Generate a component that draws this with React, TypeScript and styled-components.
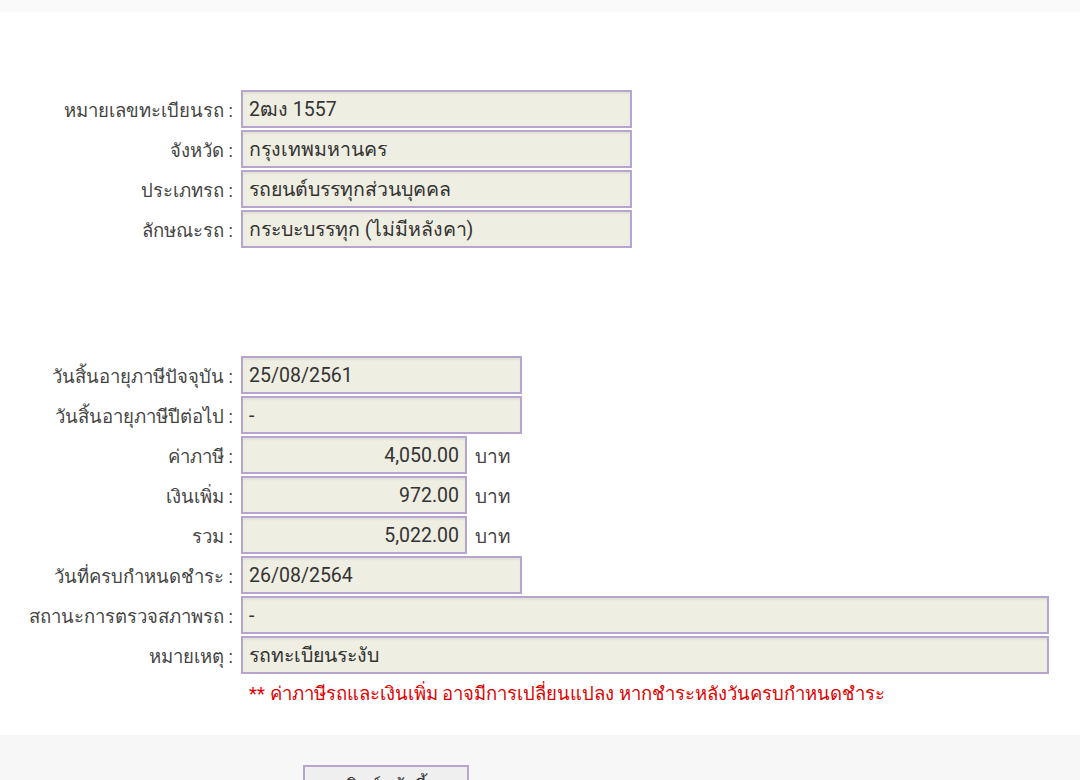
import styled, { createGlobalStyle } from "styled-components";

const GlobalStyle = createGlobalStyle`
  html, body {
    margin: 0;
    padding: 0;
    background: #ffffff;
    font-family: Roboto, "Noto Sans", "DejaVu Sans", sans-serif;
    color: #333;
  }
`;

const TopStrip = styled.div`
  height: 12px;
  background: #fafafa;
`;

const Content = styled.main`
  background: #fff;
  padding-top: 78px;
  height: 723px;
  box-sizing: border-box;
`;

const Group = styled.section<{ $gap?: number }>`
  display: grid;
  grid-template-columns: 233px 1fr;
  column-gap: 8px;
  row-gap: 2px;
  margin-bottom: ${(p) => p.$gap ?? 0}px;
`;

const Label = styled.div`
  text-align: right;
  font-size: 18.5px;
  line-height: 38px;
  height: 38px;
  padding-top: 2px;
  box-sizing: border-box;
  color: #444;
  white-space: nowrap;
`;

const FieldRow = styled.div`
  display: flex;
  align-items: center;
  gap: 8px;
`;

const Field = styled.div<{ $width: number; $right?: boolean }>`
  width: ${(p) => p.$width}px;
  height: 38px;
  box-sizing: border-box;
  border: 2px solid #b7a5cf;
  background: #efeee2;
  box-shadow: inset 0 2px 2px rgba(0, 0, 0, 0.05);
  padding: 1px 6px 0;
  font-size: 19.5px;
  line-height: 34px;
  color: #333;
  text-align: ${(p) => (p.$right ? "right" : "left")};
  white-space: nowrap;
  overflow: hidden;
`;

const Unit = styled.span`
  font-size: 19px;
  color: #444;
  padding-top: 2px;
`;

const Note = styled.p`
  margin: 8px 0 0 249px;
  color: #e00000;
  font-size: 18.5px;
  line-height: 24px;
`;

const Footer = styled.footer`
  background: #f7f7f7;
  height: 15px;
  padding-left: 303px;
  padding-top: 30px;
  overflow: hidden;
`;

const Button = styled.button`
  width: 166px;
  height: 40px;
  border: 2px solid #b7a5cf;
  background: #efefef;
  font-family: inherit;
  font-size: 18px;
  color: #333;
  padding: 0;
`;

type Row = { label: string; value: string; width: number; right?: boolean; unit?: string };

const vehicle: Row[] = [
  { label: "หมายเลขทะเบียนรถ :", value: "2ฒง 1557", width: 391 },
  { label: "จังหวัด :", value: "กรุงเทพมหานคร", width: 391 },
  { label: "ประเภทรถ :", value: "รถยนต์บรรทุกส่วนบุคคล", width: 391 },
  { label: "ลักษณะรถ :", value: "กระบะบรรทุก (ไม่มีหลังคา)", width: 391 },
];

const tax: Row[] = [
  { label: "วันสิ้นอายุภาษีปัจจุบัน :", value: "25/08/2561", width: 281 },
  { label: "วันสิ้นอายุภาษีปีต่อไป :", value: "-", width: 281 },
  { label: "ค่าภาษี :", value: "4,050.00", width: 226, right: true, unit: "บาท" },
  { label: "เงินเพิ่ม :", value: "972.00", width: 226, right: true, unit: "บาท" },
  { label: "รวม :", value: "5,022.00", width: 226, right: true, unit: "บาท" },
  { label: "วันที่ครบกำหนดชำระ :", value: "26/08/2564", width: 281 },
  { label: "สถานะการตรวจสภาพรถ :", value: "-", width: 808 },
  { label: "หมายเหตุ :", value: "รถทะเบียนระงับ", width: 808 },
];

function Rows({ rows }: { rows: Row[] }) {
  return (
    <>
      {rows.map((r) => (
        <FieldRowPair key={r.label} row={r} />
      ))}
    </>
  );
}

function FieldRowPair({ row }: { row: Row }) {
  return (
    <>
      <Label>{row.label}</Label>
      <FieldRow>
        <Field $width={row.width} $right={row.right}>
          {row.value}
        </Field>
        {row.unit && <Unit>{row.unit}</Unit>}
      </FieldRow>
    </>
  );
}

export default function App() {
  return (
    <>
      <GlobalStyle />
      <TopStrip />
      <Content>
        <Group $gap={108}>
          <Rows rows={vehicle} />
        </Group>
        <Group>
          <Rows rows={tax} />
        </Group>
        <Note>** ค่าภาษีรถและเงินเพิ่ม อาจมีการเปลี่ยนแปลง หากชำระหลังวันครบกำหนดชำระ</Note>
      </Content>
      <Footer>
        <Button>พิมพ์หน้านี้</Button>
      </Footer>
    </>
  );
}
